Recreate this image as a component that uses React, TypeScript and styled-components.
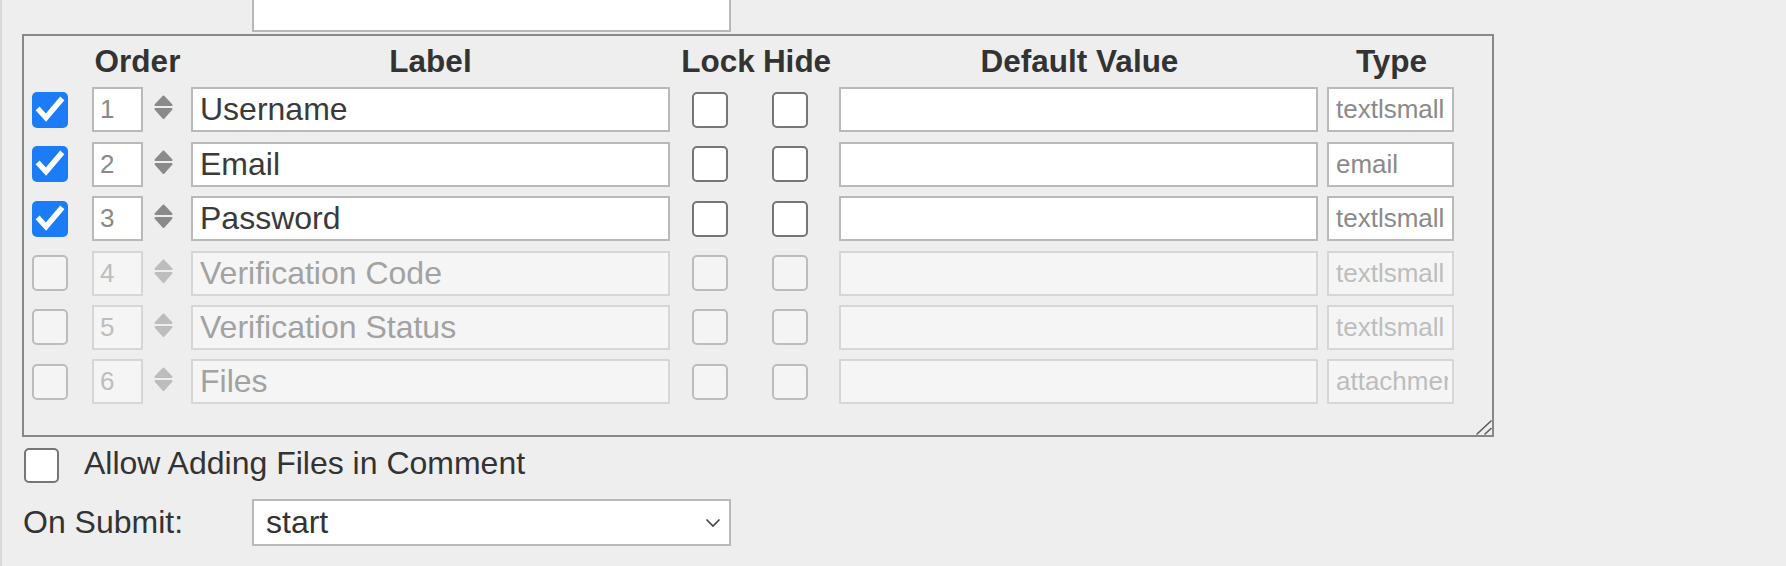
import React from 'react';
import styled, { createGlobalStyle } from 'styled-components';

const GlobalStyle = createGlobalStyle`
  html, body {
    margin: 0;
    padding: 0;
    background: #eeeeee;
  }
  body {
    font-family: 'Liberation Sans', Arial, Helvetica, sans-serif;
    overflow: hidden;
  }
`;

type Field = {
  order: number;
  label: string;
  type: string;
  enabled: boolean;
};

const fields: Field[] = [
  { order: 1, label: 'Username', type: 'textlsmall', enabled: true },
  { order: 2, label: 'Email', type: 'email', enabled: true },
  { order: 3, label: 'Password', type: 'textlsmall', enabled: true },
  { order: 4, label: 'Verification Code', type: 'textlsmall', enabled: false },
  { order: 5, label: 'Verification Status', type: 'textlsmall', enabled: false },
  { order: 6, label: 'Files', type: 'attachment', enabled: false },
];

const Page = styled.div`
  min-height: 566px;
  box-sizing: border-box;
  border-left: 2px solid #d8d8d8;
  padding-left: 20px;
  color: #333;
`;

const PrevField = styled.div`
  margin-left: 230px;
  width: 479px;
  height: 32px;
  box-sizing: border-box;
  background: #fff;
  border: 2px solid #b8b8b8;
  border-top: none;
`;

const FieldBox = styled.div`
  position: relative;
  margin-top: 2px;
  width: 1472px;
  box-sizing: border-box;
  border: 2px solid #888;
  padding: 8px 38px 31px 8px;
`;

const Grid = styled.div`
  display: grid;
  grid-template-columns: 60px 62px 37px 501px 80px 67px 488px 127px;
  grid-auto-rows: 45px;
  grid-template-rows: 34px;
  row-gap: 9.4px;
  align-items: center;
`;

const HeaderCell = styled.div<{ $col: string; $w: number; $dx?: number }>`
  grid-column: ${(p) => p.$col};
  align-self: start;
  width: ${(p) => p.$w}px;
  margin-left: ${(p) => p.$dx || 0}px;
  display: flex;
  justify-content: center;
  white-space: nowrap;
  font-size: 31.5px;
  line-height: 34px;
  font-weight: bold;
  color: #333;
`;

const CheckBox = styled.span<{ $checked?: boolean; $disabled?: boolean; $size?: number }>`
  width: ${(p) => p.$size || 36}px;
  height: ${(p) => p.$size || 36}px;
  box-sizing: border-box;
  display: inline-flex;
  align-items: center;
  justify-content: center;
  flex: none;
  border-radius: 5px;
  border: ${(p) =>
    p.$checked ? 'none' : `2px solid ${p.$disabled ? '#bcbcbc' : '#767676'}`};
  background: ${(p) =>
    p.$checked ? '#1c7cf7' : p.$disabled ? '#f4f4f4' : '#ffffff'};
`;

const TextInput = styled.input<{ $w: number; $small?: boolean; $pad?: number; $muted?: string }>`
  width: ${(p) => p.$w}px;
  height: 45px;
  box-sizing: border-box;
  margin: 0;
  padding: 0 4px 0 ${(p) => p.$pad ?? 7}px;
  font-family: 'Liberation Sans', Arial, Helvetica, sans-serif;
  font-size: ${(p) => (p.$small ? 26 : 32)}px;
  color: ${(p) => p.$muted || '#3a3a3a'};
  background: #ffffff;
  border: 2px solid #b9b9b9;
  border-radius: 0;
  outline: none;

  &:disabled {
    background: #f5f5f5;
    border-color: #d6d6d6;
    color: ${(p) => (p.$small ? '#bdbdbd' : '#a2a2a2')};
    -webkit-text-fill-color: ${(p) => (p.$small ? '#bdbdbd' : '#a2a2a2')};
  }
`;

const Spinner = styled.svg`
  width: 19px;
  height: 25px;
  margin-bottom: 4px;
`;

const Resize = styled.svg`
  position: absolute;
  right: 0;
  bottom: 0;
  width: 18px;
  height: 16px;
`;

const OptionRow = styled.label`
  display: flex;
  align-items: center;
  height: 35px;
  gap: 25px;
  margin: 11px 0 0 2px;
  font-size: 32px;
  color: #333;
`;

const OptionText = styled.span`
  line-height: 35px;
  margin-top: -5px;
`;

const SelectRow = styled.div`
  display: flex;
  align-items: center;
  margin: 16px 0 0 1px;
  font-size: 32px;
  color: #333;
`;

const SelectLabel = styled.span`
  width: 229px;
`;

const SelectBox = styled.div`
  width: 479px;
  height: 47px;
  box-sizing: border-box;
  display: flex;
  align-items: center;
  justify-content: space-between;
  padding: 0 8px 0 12px;
  background: #fff;
  border: 2px solid #b9b9b9;
  font-size: 32px;
  color: #333;
`;

const Check = () => (
  <svg width="36" height="36" viewBox="0 0 36 36">
    <path
      d="M7.5 18.5 L14 25.5 L28.5 8.5"
      fill="none"
      stroke="#fff"
      strokeWidth="5.5"
      strokeLinecap="square"
    />
  </svg>
);

const SortIcon = ({ disabled }: { disabled: boolean }) => (
  <Spinner viewBox="0 0 19 25">
    <g fill={disabled ? '#bdbdbd' : '#8a8a8a'} stroke={disabled ? '#bdbdbd' : '#8a8a8a'} strokeWidth="2" strokeLinejoin="round">
      <path d="M9.5 1.5 L17.5 10 L1.5 10 Z" />
      <path d="M1.5 14 L17.5 14 L9.5 23 Z" />
    </g>
  </Spinner>
);

const FieldRow = ({ f }: { f: Field }) => (
  <>
    <CheckBox $checked={f.enabled} $disabled={!f.enabled}>
      {f.enabled && <Check />}
    </CheckBox>
    <TextInput
      $w={51}
      $small
      $pad={6}
      $muted="#8a8a8a"
      disabled={!f.enabled}
      readOnly
      value={String(f.order)}
    />
    <SortIcon disabled={!f.enabled} />
    <TextInput $w={479} disabled={!f.enabled} readOnly value={f.label} />
    <CheckBox $disabled={!f.enabled} />
    <CheckBox $disabled={!f.enabled} />
    <TextInput $w={479} disabled={!f.enabled} readOnly value="" />
    <TextInput
      $w={127}
      $small
      $muted="#8a8a8a"
      disabled={!f.enabled}
      readOnly
      value={f.type}
    />
  </>
);

export default function App() {
  return (
    <>
      <GlobalStyle />
      <Page>
        <PrevField />
        <FieldBox>
          <Grid>
            <HeaderCell $col="2 / 4" $w={91}>Order</HeaderCell>
            <HeaderCell $col="4" $w={479}>Label</HeaderCell>
            <HeaderCell $col="5" $w={36} $dx={8}>Lock</HeaderCell>
            <HeaderCell $col="6" $w={36} $dx={7}>Hide</HeaderCell>
            <HeaderCell $col="7" $w={479} $dx={1}>Default Value</HeaderCell>
            <HeaderCell $col="8" $w={127} $dx={1}>Type</HeaderCell>
            {fields.map((f) => (
              <FieldRow key={f.order} f={f} />
            ))}
          </Grid>
          <Resize viewBox="0 0 18 16">
            <g stroke="#5a5a5a" strokeWidth="1.6" strokeLinecap="round">
              <line x1="3" y1="15" x2="17" y2="2" />
              <line x1="11" y1="15" x2="17" y2="9.5" />
            </g>
          </Resize>
        </FieldBox>
        <OptionRow>
          <CheckBox $size={35} />
          <OptionText>Allow Adding Files in Comment</OptionText>
        </OptionRow>
        <SelectRow>
          <SelectLabel>On Submit:</SelectLabel>
          <SelectBox>
            <span>start</span>
            <svg width="16" height="10" viewBox="0 0 16 10">
              <path d="M1.5 1.5 L8 8 L14.5 1.5" fill="none" stroke="#444" strokeWidth="1.6" />
            </svg>
          </SelectBox>
        </SelectRow>
      </Page>
    </>
  );
}
